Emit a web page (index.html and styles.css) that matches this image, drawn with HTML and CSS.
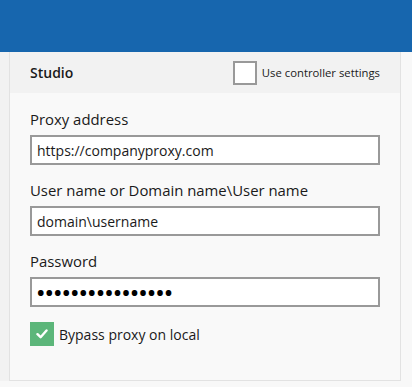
FILE: index.html
```html
<!DOCTYPE html>
<html lang="en">
<head>
    <meta charset="UTF-8">
    <meta name="viewport" content="width=device-width, initial-scale=1.0">
    <title>Proxy settings</title>
    <link rel="stylesheet" href="styles.css">
</head>
<body>
    <div class="topbar"></div>

    <div class="panel">
        <div class="panel-head">
            <span class="panel-title">Studio</span>
            <label class="controller-toggle">
                <span class="box"></span>
                <span>Use controller settings</span>
            </label>
        </div>

        <div class="panel-body">
            <div class="field">
                <label for="proxyAddress">Proxy address</label>
                <input type="text" id="proxyAddress" value="https://companyproxy.com">
            </div>
            <div class="field">
                <label for="proxyUser">User name or Domain name\User name</label>
                <input type="text" id="proxyUser" value="domain\username">
            </div>
            <div class="field">
                <label for="proxyPassword">Password</label>
                <input type="password" id="proxyPassword" value="secretpassword12">
            </div>
            <label class="bypass">
                <span class="check">
                    <svg width="12" height="10" viewBox="0 0 12 10">
                        <path d="M1.5 5.2 L4.6 8.2 L10.5 1.5" fill="none" stroke="#fff" stroke-width="2.4" stroke-linecap="round" stroke-linejoin="round"/>
                    </svg>
                </span>
                <span>Bypass proxy on local</span>
            </label>
        </div>
    </div>
</body>
</html>
```

FILE: styles.css
```css
body {
    margin: 0;
    font-family: "Open Sans", "Noto Sans", Arial, sans-serif;
    background-color: #f8f8f8;
    color: #1a1a1a;
}

.topbar {
    height: 52px;
    background-color: #1766ae;
}

.panel {
    width: 390px;
    margin-left: 9px;
    border-left: 1px solid #e2e2e2;
    border-right: 1px solid #e2e2e2;
    border-bottom: 1px solid #e2e2e2;
    box-shadow: -9px 0 0 #f2f2f2;
}

.panel-head {
    height: 41px;
    background-color: #f2f2f2;
    display: flex;
    align-items: center;
    justify-content: space-between;
    padding: 0 20px;
}

.panel-title {
    font-size: 14px;
    font-weight: 600;
}

.controller-toggle {
    display: flex;
    align-items: center;
    gap: 5px;
    font-size: 11.3px;
}

.controller-toggle .box {
    width: 20px;
    height: 20px;
    border: 2px solid #999;
    background-color: #fff;
}

.panel-body {
    background-color: #f9f9f9;
    padding: 16px 20px 34px;
}

.field {
    display: flex;
    flex-direction: column;
    margin-bottom: 15px;
}

.field label {
    font-size: 14.9px;
    line-height: 20px;
    margin-bottom: 6px;
}

.field input {
    height: 30px;
    box-sizing: border-box;
    border: 2px solid #999;
    background-color: #fff;
    padding: 0 5px;
    font-family: inherit;
    font-size: 14px;
    color: #1a1a1a;
    outline: none;
}

.field input[type="password"] {
    font-size: 20px;
    font-weight: 700;
    letter-spacing: 1px;
    color: #000;
}

.bypass {
    display: flex;
    align-items: center;
    gap: 5px;
    font-size: 14px;
}

.bypass .check {
    width: 24px;
    height: 24px;
    background-color: #5cb67a;
    display: flex;
    align-items: center;
    justify-content: center;
}
```
